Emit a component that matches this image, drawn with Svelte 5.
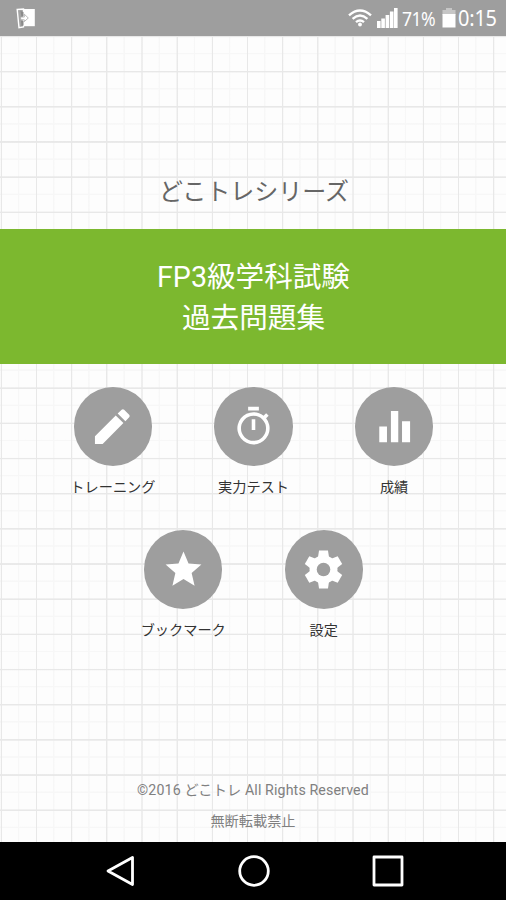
<script lang="ts">
  type Item = { label: string; icon: string };

  const rows: Item[][] = [
    [
      { label: "トレーニング", icon: "pencil" },
      { label: "実力テスト", icon: "timer" },
      { label: "成績", icon: "chart" },
    ],
    [
      { label: "ブックマーク", icon: "star" },
      { label: "設定", icon: "gear" },
    ],
  ];
</script>

<div class="screen">
  <header class="status">
    <svg class="notice" viewBox="0 0 20 21" width="20" height="21">
      <path d="M7 1h11.8v17.2H7z" fill="#fff" />
      <path d="M1.2 1.5L7.5 1v18L3 19.8z" fill="#a4a4a4" stroke="#fff" stroke-width="1.4" />
      <path d="M4.5 3l3 1v4l-2 1zM5 13l2.5 0v4.5l-2 .5z" fill="#8a8a8a" />
      <path d="M4.5 9h3.8V6.2l4 3.8-4 3.6v-1.8h-3.5z" fill="#fff" stroke="#aaa" stroke-width=".8" />
    </svg>
    <div class="indicators">
      <svg class="wifi" viewBox="0 0 24 18" width="24" height="18">
        <g fill="none" stroke="#fff" stroke-width="2.4">
          <path d="M1 6.3Q12-3.3 23 6.3" />
          <path d="M4.6 9.8Q12 3.4 19.4 9.8" />
          <path d="M8 13.2Q12 9.8 16 13.2" />
        </g>
        <circle cx="12" cy="15.5" r="1.9" fill="#fff" />
      </svg>
      <svg class="signal" viewBox="0 0 21 20" width="21" height="20">
        <path d="M0 13h3.6v7H0zM4.3 10.5h3.6V20H4.3zM8.6 7h3.6v13H8.6zM12.9 3.5h3.6V20h-3.6zM17 0h3.6v20H17z" fill="#fff" />
      </svg>
      <span class="percent">71%</span>
      <svg class="battery" viewBox="0 0 14 20" width="14" height="20">
        <path d="M4 0h6v2h3.5v5H.5V2H4z" fill="#c6c6c6" />
        <path d="M.5 6h13v13.5H.5z" fill="#fff" />
      </svg>
      <span class="clock">0:15</span>
    </div>
  </header>

  <main>
    <p class="series">どこトレシリーズ</p>
    <h1>FP3級学科試験<br />過去問題集</h1>

    <nav class="menu">
      {#each rows as row}
        <div class="row">
          {#each row as item}
            <button>
              <span class="disc">
                <svg viewBox="0 0 24 24" width="43" height="43" fill="#fff">
                  {#if item.icon === "pencil"}
                    <path d="M2.2 17.4v4.3h4.3L18.1 10.1l-4.3-4.3L2.2 17.4zM21.3 6.9a1 1 0 0 0 0-1.4l-2.8-2.8a1 1 0 0 0-1.4 0l-2.2 2.1 4.3 4.3z" />
                  {:else if item.icon === "timer"}
                    <path d="M15 1H9v2h6V1zm-4 13h2V8h-2v6zm8.03-6.61l1.42-1.42c-.43-.51-.9-.99-1.41-1.41l-1.42 1.42A8.96 8.96 0 0 0 12 4a9 9 0 1 0 7.03 3.39zM12 20a7 7 0 1 1 0-14 7 7 0 0 1 0 14z" />
                  {:else if item.icon === "chart"}
                    <path d="M10 3.4h4.1v17.4H10zM3.5 12h4.3v8.8H3.5zM16.2 9.1h4.5v11.7h-4.5z" />
                  {:else if item.icon === "star"}
                    <path d="M12 17.27L18.18 21l-1.64-7.03L22 9.24l-7.19-.61L12 2 9.19 8.63 2 9.24l5.46 4.73L5.82 21z" />
                  {:else}
                    <circle cx="12" cy="12" r="7.8" />
                    {#each [0, 60, 120] as angle}
                      <path
                        d="M9.5 1.4h5l.7 4.6v12l-.7 4.6h-5L8.8 18V6z"
                        transform="rotate({angle} 12 12)"
                      />
                    {/each}
                    <circle cx="12" cy="12" r="3.8" fill="#9e9e9e" />
                  {/if}
                </svg>
              </span>
              <span class="label">{item.label}</span>
            </button>
          {/each}
        </div>
      {/each}
    </nav>

    <footer>
      <p class="copyright">©2016 どこトレ All Rights Reserved</p>
      <p>無断転載禁止</p>
    </footer>
  </main>

  <div class="navbar">
    <svg viewBox="0 0 32 34" width="32" height="34">
      <path d="M28.5 3.5v27L4 17z" />
    </svg>
    <svg viewBox="0 0 32 34" width="32" height="34">
      <circle cx="16" cy="17" r="14.3" />
    </svg>
    <svg viewBox="0 0 32 34" width="32" height="34">
      <path d="M2 3h28v28H2z" />
    </svg>
  </div>
</div>

<style>
  :global(body) {
    margin: 0;
  }

  .screen {
    display: flex;
    flex-direction: column;
    width: 506px;
    height: 900px;
    overflow: hidden;
    font-family: Roboto, "Noto Sans CJK JP", sans-serif;
  }

  .status {
    display: flex;
    justify-content: space-between;
    height: 36px;
    padding: 0 8px 0 16px;
    box-sizing: border-box;
    background: #9e9e9e;
    color: #fff;
  }

  .notice {
    margin-top: 8px;
  }

  .indicators {
    display: flex;
    align-items: center;
    font-family: "Noto Sans", sans-serif;
    white-space: nowrap;
  }

  .signal {
    margin-left: 5px;
  }

  .percent {
    width: 34px;
    margin-left: 4px;
    font-size: 20px;
    letter-spacing: -0.6px;
    transform: scaleX(0.88);
    transform-origin: left;
  }

  .battery {
    margin-left: 6px;
  }

  .clock {
    width: 40px;
    margin-left: 2px;
    font-size: 21px;
    letter-spacing: -0.2px;
    transform: scaleX(0.95);
    transform-origin: left;
  }

  main {
    display: flex;
    flex-direction: column;
    height: 806px;
    background:
      repeating-linear-gradient(90deg, transparent 0 0.4px, #e8e8e8 1px 1.6px, transparent 2.3px 35.17px),
      repeating-linear-gradient(180deg, #e8e8e8 0 0.9px, transparent 1.6px 34.6px, #e8e8e8 35.17px),
      repeating-linear-gradient(90deg, transparent 0 17.6px, #f7f7f7 18.2px 19px, transparent 19.6px 35.17px),
      repeating-linear-gradient(180deg, transparent 0 16.6px, #f7f7f7 17.2px 18px, transparent 18.6px 35.17px),
      #fdfdfd;
  }

  p,
  h1 {
    margin: 0;
    text-align: center;
  }

  .series {
    height: 55px;
    margin-top: 138px;
    padding-left: 2px;
    color: #666;
    font-size: 24px;
    line-height: 36px;
  }

  h1 {
    height: 135px;
    padding: 28px 0 0 1px;
    box-sizing: border-box;
    background: #7cb82f;
    color: #fff;
    font-size: 28.6px;
    font-weight: 400;
    line-height: 41px;
  }

  .menu {
    padding: 23px 0 0 1px;
  }

  .row {
    display: flex;
    justify-content: center;
    height: 143px;
  }

  button {
    display: flex;
    flex-direction: column;
    align-items: center;
    width: 140.6px;
    padding: 0;
    border: 0;
    background: none;
    font: inherit;
  }

  .disc {
    display: flex;
    align-items: center;
    justify-content: center;
    width: 78.5px;
    height: 78.5px;
    border-radius: 50%;
    background: #9e9e9e;
  }

  .label {
    margin-top: 11px;
    color: #333;
    font-size: 14.2px;
    line-height: 20px;
  }

  footer {
    margin-top: auto;
    padding-bottom: 5px;
    color: #808080;
    font-size: 14.2px;
    line-height: 31px;
  }

  .copyright {
    letter-spacing: 0.13px;
  }

  .navbar {
    display: flex;
    justify-content: center;
    align-items: center;
    gap: 102px;
    height: 58px;
    padding-left: 1px;
    background: #000;
  }

  .navbar svg {
    fill: none;
    stroke: #fff;
    stroke-width: 2.8;
    stroke-linejoin: round;
  }
</style>
